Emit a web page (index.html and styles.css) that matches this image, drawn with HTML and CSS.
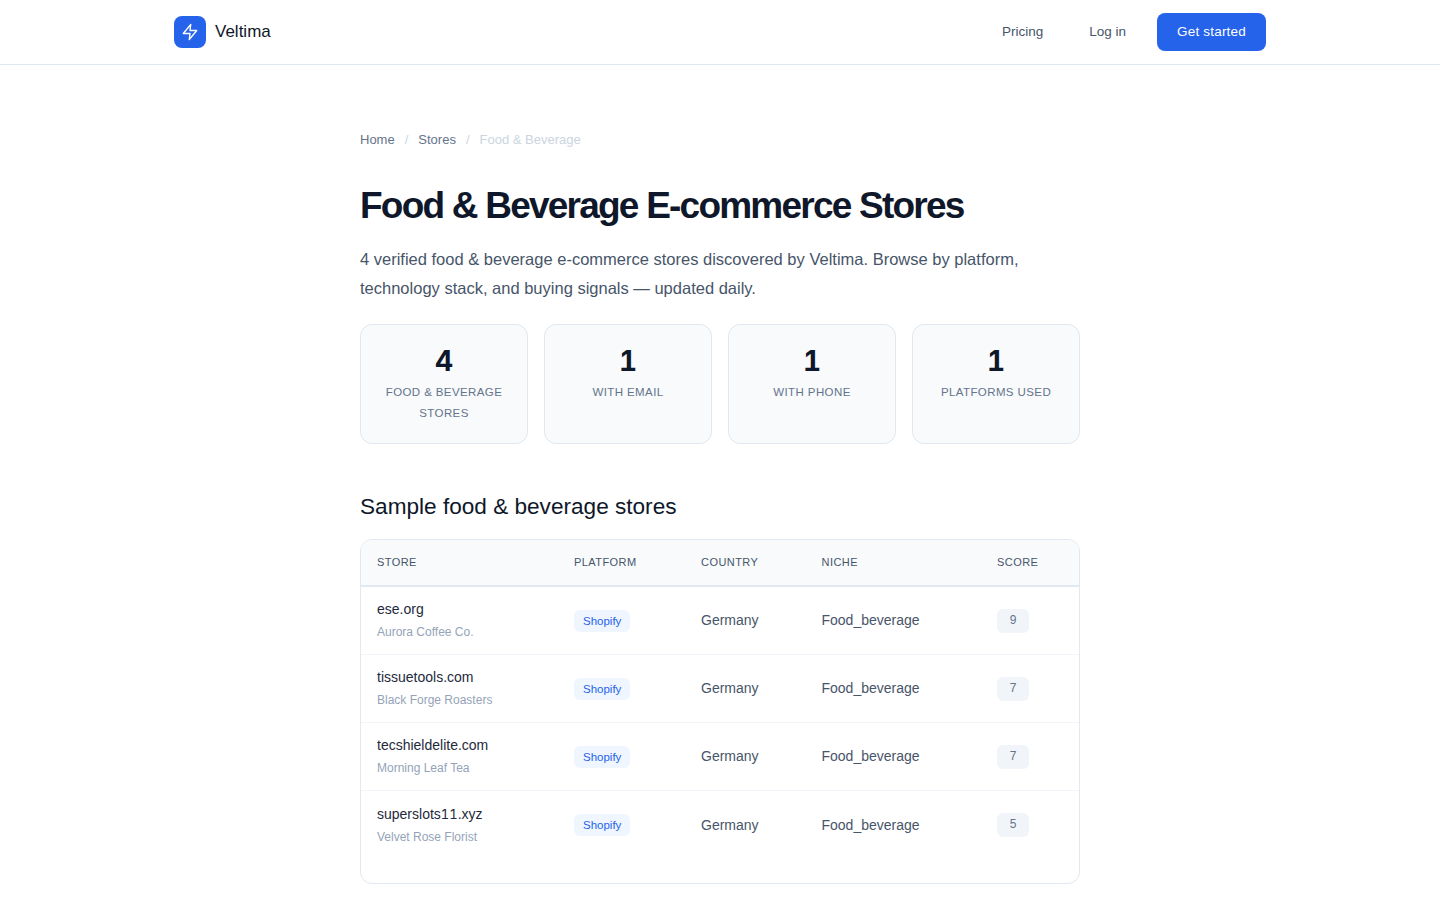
FILE: index.html
```html
<!DOCTYPE html>
<html lang="en">
<head>
<meta charset="utf-8">
<title>Food &amp; Beverage E-commerce Stores</title>
<link rel="stylesheet" href="styles.css">
</head>
<body>
<header class="site-header">
  <div class="header-inner">
    <a class="brand" href="#">
      <span class="brand-mark">
        <svg viewBox="0 0 24 24" width="18" height="18" fill="none" stroke="#fff" stroke-width="1.8" stroke-linecap="round" stroke-linejoin="round"><path d="M13 2 3 14h9l-1 8 10-12h-9l1-8z"/></svg>
      </span>
      <span class="brand-name">Veltima</span>
    </a>
    <nav class="nav">
      <a class="nav-link" href="#">Pricing</a>
      <a class="nav-link" href="#">Log in</a>
      <a class="nav-cta" href="#">Get started</a>
    </nav>
  </div>
</header>
<main class="page">
  <nav class="crumbs">
    <a href="#">Home</a><span class="sep">/</span><a href="#">Stores</a><span class="sep">/</span><span class="current">Food &amp; Beverage</span>
  </nav>
  <h1>Food &amp; Beverage E-commerce Stores</h1>
  <p class="lead">4 verified food &amp; beverage e-commerce stores discovered by Veltima. Browse by platform, technology stack, and buying signals — updated daily.</p>
  <section class="stats">
    <div class="stat"><div class="stat-num">4</div><div class="stat-label">Food &amp; Beverage Stores</div></div>
    <div class="stat"><div class="stat-num">1</div><div class="stat-label">With Email</div></div>
    <div class="stat"><div class="stat-num">1</div><div class="stat-label">With Phone</div></div>
    <div class="stat"><div class="stat-num">1</div><div class="stat-label">Platforms Used</div></div>
  </section>
  <h2>Sample food &amp; beverage stores</h2>
  <div class="table-wrap">
    <table>
      <thead>
        <tr><th>Store</th><th>Platform</th><th>Country</th><th>Niche</th><th>Score</th></tr>
      </thead>
      <tbody>
        <tr>
          <td><div class="domain">ese.org</div><div class="company">Aurora Coffee Co.</div></td>
          <td><span class="badge">Shopify</span></td><td>Germany</td><td>Food_beverage</td><td><span class="score">9</span></td>
        </tr>
        <tr>
          <td><div class="domain">tissuetools.com</div><div class="company">Black Forge Roasters</div></td>
          <td><span class="badge">Shopify</span></td><td>Germany</td><td>Food_beverage</td><td><span class="score">7</span></td>
        </tr>
        <tr>
          <td><div class="domain">tecshieldelite.com</div><div class="company">Morning Leaf Tea</div></td>
          <td><span class="badge">Shopify</span></td><td>Germany</td><td>Food_beverage</td><td><span class="score">7</span></td>
        </tr>
        <tr>
          <td><div class="domain">superslots<span class="digits">11</span>.xyz</div><div class="company">Velvet Rose Florist</div></td>
          <td><span class="badge">Shopify</span></td><td>Germany</td><td>Food_beverage</td><td><span class="score">5</span></td>
        </tr>
      </tbody>
    </table>
  </div>
</main>
</body>
</html>
```
FILE: styles.css
```css
* { box-sizing: border-box; }
html, body { margin: 0; padding: 0; }
body { font-family: "Liberation Sans", Arial, sans-serif; color: #0f172a; background: #fff; }
a { color: inherit; text-decoration: none; }

.site-header { border-bottom: 1px solid #e2e8f0; height: 65px; }
.header-inner { max-width: 1140px; margin: 0 auto; padding: 0 24px; height: 64px; display: flex; align-items: center; justify-content: space-between; }
.brand { display: flex; align-items: center; gap: 9px; }
.brand-mark { width: 32px; height: 32px; border-radius: 8px; background: #2563eb; display: flex; align-items: center; justify-content: center; }
.brand-name { font-size: 17px; color: #0f172a; }
.nav { display: flex; align-items: center; gap: 16px; }
.nav-link { font-size: 13.5px; color: #475569; padding: 0 15px 2px; }
.nav-cta { font-size: 13.5px; letter-spacing: 0.015em; color: #fff; background: #2563eb; border-radius: 8px; height: 38px; padding: 0 20px 2px; display: flex; align-items: center; }

.page { max-width: 768px; margin: 0 auto; padding: 64px 24px 0; }
.crumbs { font-size: 13px; color: #64748b; display: flex; gap: 10px; height: 21px; align-items: center; }
.crumbs .sep { color: #cbd5e1; }
.crumbs .current { color: #cbd5e1; }
h1 { margin: 32px 0 0; font-size: 37px; line-height: 48px; font-weight: 700; letter-spacing: -0.048em; color: #0f172a; }
.lead { margin: 15px 0 0; font-size: 16.5px; line-height: 29px; color: #475569; }
.stats { margin-top: 21px; display: grid; grid-template-columns: repeat(4, 1fr); gap: 16px; }
.stat { height: 120px; padding: 19px 16px; background: #f8fafc; border: 1px solid #e2e8f0; border-radius: 12px; text-align: center; }
.stat-num { font-family: Inter, sans-serif; font-variant-numeric: tabular-nums; font-size: 28px; line-height: 34px; font-weight: 700; color: #0f172a; }
.stat-label { margin-top: 4px; font-size: 11.5px; line-height: 21px; letter-spacing: 0.035em; text-transform: uppercase; color: #64748b; }
h2 { margin: 48px 0 0; font-size: 22.6px; line-height: 30px; font-weight: 400; color: #0f172a; }

.table-wrap { margin-top: 17px; border: 1px solid #e2e8f0; border-radius: 12px; overflow: hidden; padding-bottom: 23.5px; }
table { width: 100%; table-layout: fixed; border-collapse: separate; border-spacing: 0; font-size: 14px; }
th { text-align: left; font-size: 11px; font-weight: 400; letter-spacing: 0.04em; text-transform: uppercase; color: #475569; background: #f8fafc; padding: 0 16px 2px; height: 47px; border-bottom: 2px solid #e2e8f0; }
th:nth-child(1) { width: 197px; }
th:nth-child(2) { width: 127px; }
th:nth-child(3) { width: 120.5px; }
th:nth-child(4) { width: 175.5px; }
td { padding: 11px 16px 12px; color: #475569; border-bottom: 1px solid #f1f5f9; height: 68.15px; vertical-align: middle; }
tbody tr:last-child td { border-bottom: 0; }
.domain { font-size: 14px; line-height: 22px; color: #1e293b; }
.digits { font-family: Inter, sans-serif; font-variant-numeric: tabular-nums; font-size: 13px; }
.company { margin-top: 2px; font-size: 12px; line-height: 20px; color: #94a3b8; }
.badge { display: inline-block; vertical-align: middle; margin-top: 1px; font-size: 11.5px; line-height: 16px; padding: 3px 9px; border-radius: 6px; background: #eff6ff; color: #2563eb; }
.score { display: inline-block; vertical-align: middle; margin-top: 1px; width: 32px; height: 24px; line-height: 22px; text-align: center; font-size: 12px; border-radius: 6px; background: #f1f5f9; color: #64748b; }
```
